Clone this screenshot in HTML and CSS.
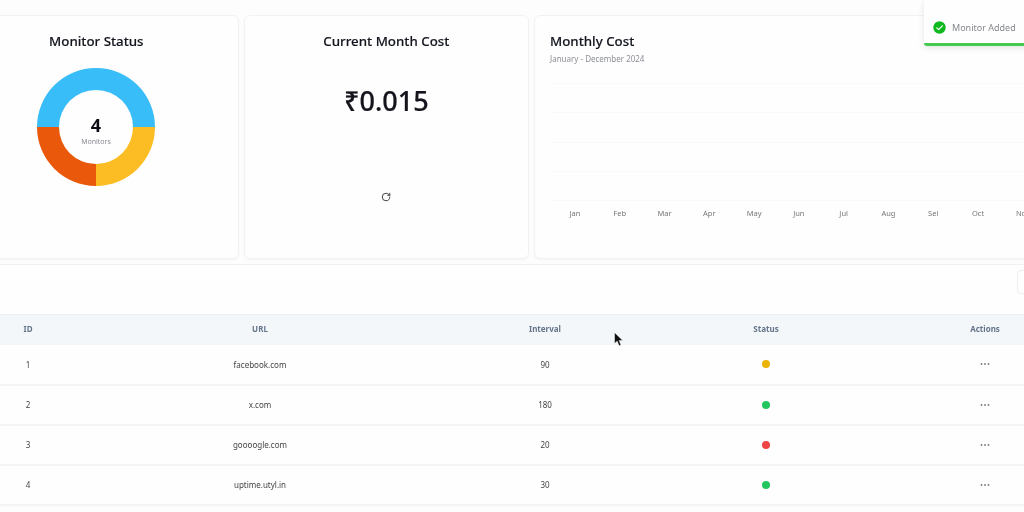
FILE: index.html
```html
<!DOCTYPE html>
<html lang="en">
<head>
<meta charset="utf-8">
<title>Monitors</title>
<link rel="stylesheet" href="styles.css">
</head>
<body>
<div class="page">
  <section class="cards">
    <article class="card card-center">
      <h2 class="card-title">Monitor Status</h2>
      <svg class="donut" width="118" height="118" viewBox="0 0 118 118">
        <path fill="#38bdf8" d="M0 59a59 59 0 0 1 118 0H96a37 37 0 0 0-74 0Z"/>
        <path fill="#fbbd23" d="M118 59a59 59 0 0 1-59 59V96a37 37 0 0 0 37-37Z"/>
        <path fill="#ea580c" d="M59 118A59 59 0 0 1 0 59H22a37 37 0 0 0 37 37Z"/>
        <text class="donut-num" x="59" y="63.5" text-anchor="middle">4</text>
        <text class="donut-label" x="59" y="75.5" text-anchor="middle">Monitors</text>
      </svg>
    </article>
    <article class="card card-center">
      <h2 class="card-title">Current Month Cost</h2>
      <p class="cost">₹0.015</p>
      <svg class="refresh" width="10" height="10" viewBox="0 0 24 24" fill="none" stroke="#333" stroke-width="2.2" stroke-linecap="round" stroke-linejoin="round">
        <path d="M21 12a9 9 0 1 1-9-9c2.52 0 4.93 1 6.74 2.74L21 8"/>
        <path d="M21 3v5h-5"/>
      </svg>
    </article>
    <article class="card card-chart">
      <h2 class="card-title">Monthly Cost</h2>
      <p class="subtitle">January - December 2024</p>
      <div class="grid-lines">
        <div class="grid-line"></div>
        <div class="grid-line"></div>
        <div class="grid-line"></div>
        <div class="grid-line"></div>
      </div>
      <div class="months">
        <span>Jan</span><span>Feb</span><span>Mar</span><span>Apr</span><span>May</span><span>Jun</span><span>Jul</span><span>Aug</span><span>Sel</span><span>Oct</span><span>Nov</span><span>Dec</span>
      </div>
    </article>
  </section>
  <section class="panel">
    <div class="toolbar"><div class="tool-button"></div></div>
    <table class="monitors">
      <colgroup>
        <col class="col-id"><col class="col-url"><col class="col-interval"><col class="col-status"><col class="col-actions">
      </colgroup>
      <thead>
        <tr><th>ID</th><th>URL</th><th>Interval</th><th>Status</th><th>Actions</th></tr>
      </thead>
      <tbody>
        <tr><td>1</td><td>facebook.com</td><td>90</td><td><span class="dot dot-yellow"></span></td><td><svg class="more" width="10" height="4" viewBox="0 0 10 4"><circle cx="1.5" cy="2" r=".9"/><circle cx="5" cy="2" r=".9"/><circle cx="8.5" cy="2" r=".9"/></svg></td></tr>
        <tr><td>2</td><td>x.com</td><td>180</td><td><span class="dot dot-green"></span></td><td><svg class="more" width="10" height="4" viewBox="0 0 10 4"><circle cx="1.5" cy="2" r=".9"/><circle cx="5" cy="2" r=".9"/><circle cx="8.5" cy="2" r=".9"/></svg></td></tr>
        <tr><td>3</td><td>goooogle.com</td><td>20</td><td><span class="dot dot-red"></span></td><td><svg class="more" width="10" height="4" viewBox="0 0 10 4"><circle cx="1.5" cy="2" r=".9"/><circle cx="5" cy="2" r=".9"/><circle cx="8.5" cy="2" r=".9"/></svg></td></tr>
        <tr><td>4</td><td>uptime.utyl.in</td><td>30</td><td><span class="dot dot-green"></span></td><td><svg class="more" width="10" height="4" viewBox="0 0 10 4"><circle cx="1.5" cy="2" r=".9"/><circle cx="5" cy="2" r=".9"/><circle cx="8.5" cy="2" r=".9"/></svg></td></tr>
      </tbody>
    </table>
  </section>
  <div class="toast">
    <svg width="13" height="13" viewBox="0 0 13 13"><circle cx="6.5" cy="6.5" r="6.2" fill="#0fb81f"/><path d="M3.8 6.8l1.9 1.9 3.6-3.9" fill="none" stroke="#fff" stroke-width="1.2" stroke-linecap="round" stroke-linejoin="round"/></svg>
    <span>Monitor Added</span>
  </div>
  <svg class="cursor" width="11" height="15" viewBox="0 0 11 15"><path d="M0.5 0.5V11.5L3.2 9.2L5 13.8L7 13L5.2 8.6H8.8Z" fill="#111" stroke="#fff" stroke-width=".5"/></svg>
</div>
</body>
</html>
```
FILE: styles.css
```css
* { box-sizing: border-box; }
html, body { margin: 0; padding: 0; }
body { background: #fdfdfd; font-family: "Noto Sans", "Open Sans", sans-serif; color: #111; overflow: hidden; }
.page { position: relative; width: 1024px; height: 512px; overflow: hidden; padding-top: 15px; filter: blur(.35px); }
.cards { display: flex; gap: 5.3px; margin-left: -46px; width: 1160px; height: 244px; }
.card { background: #fefefe; border: 1px solid #f1f2f4; border-radius: 6px; box-shadow: 0 1px 2px rgba(0,0,0,.04); flex: 0 0 284.7px; }
.card-center { display: flex; flex-direction: column; align-items: center; padding-top: 16px; }
.card-chart { flex: 1; padding: 16px 15px 0; }
.card-title { margin: 0; font-size: 13.3px; line-height: 19px; font-weight: 500; color: #14161f; -webkit-text-stroke: .15px #14161f; }
.donut { margin-top: 17px; display: block; }
.donut-num { font-size: 18px; font-weight: 700; fill: #0c0c14; }
.donut-label { font-size: 7px; fill: #8a8d94; }
.cost { margin: 31px 0 0; font-size: 27px; line-height: 37px; font-weight: 500; color: #14141c; -webkit-text-stroke: .2px #14141c; }
.refresh { margin-top: 73px; }
.subtitle { margin: 1px 0 0; font-size: 8px; line-height: 13px; color: #8b8e96; }
.grid-lines { margin-top: 18px; margin-left: 2px; }
.grid-line { height: 29.3px; border-top: 1px solid #fafafa; }
.months { display: grid; grid-template-columns: repeat(12, 44.8px); margin-left: 2.5px; border-top: 1px solid #f9f9fa; padding-top: 6px; font-size: 7.5px; line-height: 12px; color: #777; text-align: center; }
.panel { margin-top: 5px; margin-left: -47px; width: 1160px; border: 1px solid #f0f1f3; border-bottom: 0; background: #fefefe; }
.toolbar { height: 49px; padding: 5px 0 0 1063px; }
.tool-button { width: 60px; height: 24px; border: 1px solid #eceef0; border-radius: 4px; }
.monitors { width: 1156px; table-layout: fixed; border-collapse: collapse; font-size: 8px; text-align: center; }
.col-id { width: 148px; }
.col-url { width: 316px; }
.col-interval { width: 254px; }
.col-status { width: 188px; }
.col-actions { width: 250px; }
.monitors th { height: 30px; padding: 0 0 3px; background: #f4f7f9; border-top: 1px solid #eef1f3; font-weight: 700; color: #64748b; }
.monitors td { height: 40px; padding: 0; border-bottom: 2px solid #f3f4f6; color: #444; vertical-align: middle; }
.dot { display: block; width: 8px; height: 8px; border-radius: 50%; margin: 0 auto; }
.dot-yellow { background: #eab308; }
.dot-green { background: #22c55e; }
.dot-red { background: #ef4444; }
.more { fill: #777; display: block; margin: 0 auto; }
.toast { position: absolute; left: 924px; top: 0; width: 110px; height: 46px; display: flex; align-items: center; gap: 6px; padding: 11px 0 0 9px; background: #fefefe; border-bottom: 3px solid #45c94f; border-radius: 0 0 0 3px; box-shadow: 0 2px 6px rgba(0,0,0,.1); font-size: 9px; color: #85878c; }
.cursor { position: absolute; left: 614px; top: 332px; }
```
